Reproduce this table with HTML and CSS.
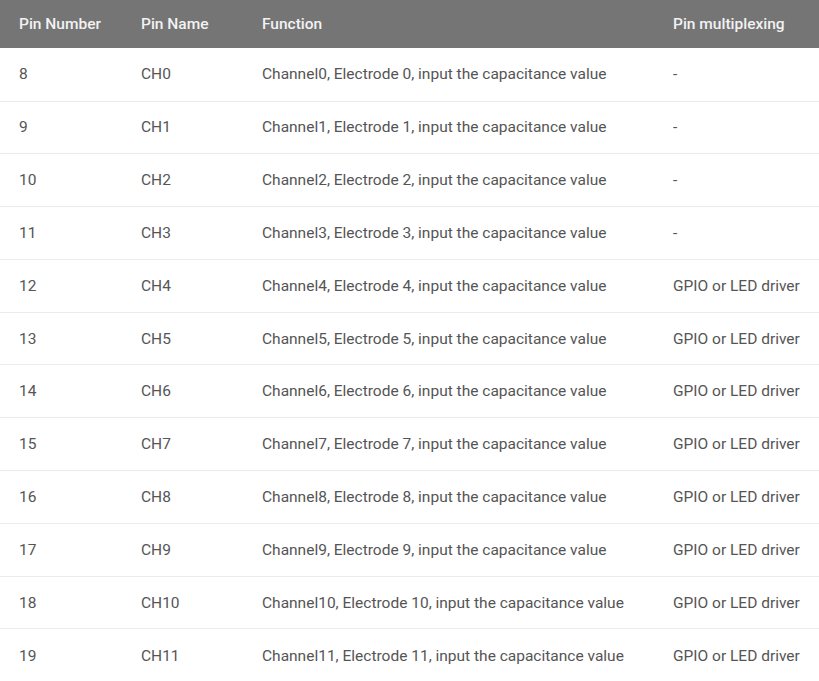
FILE: index.html
```html
<!DOCTYPE html>
<html>
<head>
<meta charset="utf-8">
<link rel="stylesheet" href="styles.css">
</head>
<body>
<table class="pins">
  <thead>
    <tr><th class="c1">Pin Number</th><th class="c2">Pin Name</th><th class="c3">Function</th><th class="c4">Pin multiplexing</th></tr>
  </thead>
  <tbody>
    <tr><td>8</td><td>CH0</td><td>Channel0, Electrode 0, input the capacitance value</td><td>-</td></tr>
    <tr><td>9</td><td>CH1</td><td>Channel1, Electrode 1, input the capacitance value</td><td>-</td></tr>
    <tr><td>10</td><td>CH2</td><td>Channel2, Electrode 2, input the capacitance value</td><td>-</td></tr>
    <tr><td>11</td><td>CH3</td><td>Channel3, Electrode 3, input the capacitance value</td><td>-</td></tr>
    <tr><td>12</td><td>CH4</td><td>Channel4, Electrode 4, input the capacitance value</td><td>GPIO or LED driver</td></tr>
    <tr><td>13</td><td>CH5</td><td>Channel5, Electrode 5, input the capacitance value</td><td>GPIO or LED driver</td></tr>
    <tr><td>14</td><td>CH6</td><td>Channel6, Electrode 6, input the capacitance value</td><td>GPIO or LED driver</td></tr>
    <tr><td>15</td><td>CH7</td><td>Channel7, Electrode 7, input the capacitance value</td><td>GPIO or LED driver</td></tr>
    <tr><td>16</td><td>CH8</td><td>Channel8, Electrode 8, input the capacitance value</td><td>GPIO or LED driver</td></tr>
    <tr><td>17</td><td>CH9</td><td>Channel9, Electrode 9, input the capacitance value</td><td>GPIO or LED driver</td></tr>
    <tr><td>18</td><td>CH10</td><td>Channel10, Electrode 10, input the capacitance value</td><td>GPIO or LED driver</td></tr>
    <tr><td>19</td><td>CH11</td><td>Channel11, Electrode 11, input the capacitance value</td><td>GPIO or LED driver</td></tr>
  </tbody>
</table>
</body>
</html>
```
FILE: styles.css
```css
html, body {
  margin: 0;
  padding: 0;
  background: #ffffff;
}
.pins {
  width: 819px;
  border-collapse: collapse;
  table-layout: fixed;
  font-family: Roboto, "Liberation Sans", sans-serif;
  font-size: 15.5px;
  color: #555555;
}
.pins th {
  background: #757575;
  color: #f2f2f2;
  font-weight: 500;
  text-align: left;
  height: 48px;
  padding: 0 0 0 19px;
  box-sizing: border-box;
}
.pins td {
  height: 52.8px;
  padding: 0 0 0 19px;
  border-top: 1px solid #ececec;
  box-sizing: border-box;
  white-space: nowrap;
}
.pins tbody tr:first-child td {
  border-top: none;
  height: 53px;
}
.c1 { width: 122px; }
.c2 { width: 121px; }
.c3 { width: 411px; }
.c4 { width: 165px; }
```
